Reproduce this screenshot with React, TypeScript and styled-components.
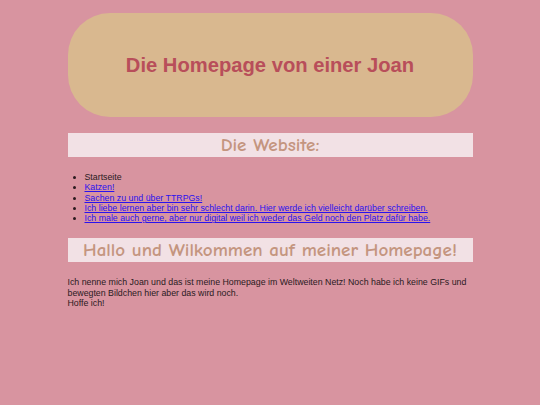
import styled, { createGlobalStyle } from "styled-components";

const GlobalStyle = createGlobalStyle`
  html, body {
    margin: 0;
    padding: 0;
    background: #d894a0;
  }
  body {
    font-family: "Liberation Sans", Arial, sans-serif;
    color: #2a1a1e;
  }
`;

const links = [
  "Katzen!",
  "Sachen zu und über TTRPGs!",
  "Ich liebe lernen aber bin sehr schlecht darin. Hier werde ich vielleicht darüber schreiben.",
  "Ich male auch gerne, aber nur digital weil ich weder das Geld noch den Platz dafür habe.",
];

export default function App() {
  return (
    <>
      <GlobalStyle />
      <Page>
        <Header>
          <Title>Die Homepage von einer Joan</Title>
        </Header>
        <Banner $top={16}>Die Website:</Banner>
        <NavList>
          <li>Startseite</li>
          {links.map((l) => (
            <li key={l}>
              <NavLink href="#">{l}</NavLink>
            </li>
          ))}
        </NavList>
        <Banner $top={15}>Hallo und Wilkommen auf meiner Homepage!</Banner>
        <Intro>
          Ich nenne mich Joan und das ist meine Homepage im Weltweiten Netz! Noch
          habe ich keine GIFs und bewegten Bildchen hier aber das wird noch.
          <br />
          Hoffe ich!
        </Intro>
      </Page>
    </>
  );
}

const Page = styled.div`
  width: 405px;
  margin: 0 auto;
  padding-top: 13px;
  display: flex;
  flex-direction: column;
`;

const Header = styled.header`
  height: 104px;
  background: #d9b88f;
  border-radius: 42px;
  display: flex;
  align-items: center;
  justify-content: center;
`;

const Title = styled.h1`
  margin: 0;
  font-family: "Liberation Sans", Arial, sans-serif;
  font-size: 20.2px;
  font-weight: bold;
  color: #b84e5a;
`;

const Banner = styled.h2<{ $top: number }>`
  margin: ${(p) => p.$top}px 0 0;
  height: 24px;
  line-height: 24px;
  background: #f2e1e5;
  color: #c4957f;
  text-align: center;
  font-family: "Comic Sans MS", "Comic Neue", cursive;
  font-size: 19px;
  font-weight: bold;
`;

const NavList = styled.ul`
  margin: 15px 0 0;
  padding-left: 17px;
  font-size: 8.8px;
  line-height: 10.3px;
`;

const NavLink = styled.a`
  color: #2a12ee;
`;

const Intro = styled.p`
  margin: 15px 0 0;
  font-size: 8.8px;
  line-height: 10.5px;
`;
